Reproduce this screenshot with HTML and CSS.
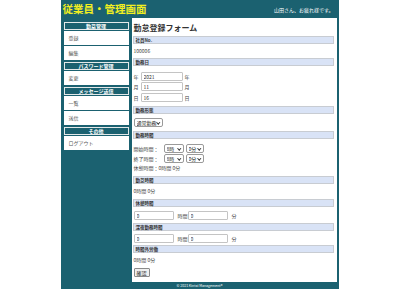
FILE: index.html
```html
<!DOCTYPE html>
<html lang="ja">
<head>
<meta charset="utf-8">
<title>従業員・管理画面</title>
<link rel="stylesheet" href="styles.css">
</head>
<body>
<div class="page">
  <header class="top">
    <h1 class="logo">従業員・管理画面</h1>
    <p class="greet">山田さん、お疲れ様です。</p>
  </header>
  <div class="body">
    <nav class="side">
      <div class="sec">
        <div class="sec-h">勤怠管理</div>
        <a class="item" href="#">登録</a>
        <a class="item" href="#">編集</a>
      </div>
      <div class="sec">
        <div class="sec-h">パスワード管理</div>
        <a class="item" href="#">変更</a>
      </div>
      <div class="sec">
        <div class="sec-h">メッセージ送信</div>
        <a class="item" href="#">一覧</a>
        <a class="item" href="#">送信</a>
      </div>
      <div class="sec">
        <div class="sec-h">その他</div>
        <a class="item" href="#">ログアウト</a>
      </div>
    </nav>
    <main class="panel">
      <h2 class="title">勤怠登録フォーム</h2>

      <div class="bar">社員No.</div>
      <div class="blk blk-text">100006</div>

      <div class="bar">勤務日</div>
      <div class="blk blk-date">
        <div class="row"><span>年</span><input class="inp inp-date" value="2021"><span>年</span></div>
        <div class="row"><span>月</span><input class="inp inp-date" value="11"><span>月</span></div>
        <div class="row"><span>日</span><input class="inp inp-date" value="16"><span>日</span></div>
      </div>

      <div class="bar">勤務形態</div>
      <div class="blk blk-sel">
        <span class="sel sel-type"><select><option>通常勤務</option></select></span>
      </div>

      <div class="bar">勤務時間</div>
      <div class="blk blk-time">
        <div class="row"><span class="lbl">開始時間：</span><span class="sel sel-h"><select><option>8時</option></select></span><span class="sel sel-m"><select><option>0分</option></select></span></div>
        <div class="row"><span class="lbl">終了時間：</span><span class="sel sel-h"><select><option>8時</option></select></span><span class="sel sel-m"><select><option>0分</option></select></span></div>
        <div class="row row-text">休憩時間：0時間 0分</div>
      </div>

      <div class="bar">勤怠時間</div>
      <div class="blk blk-text2">0時間 0分</div>

      <div class="bar">休憩時間</div>
      <div class="blk blk-inp">
        <div class="row"><input class="inp inp-wide" value="0"><span class="unit">時間</span><input class="inp inp-wide" value="0"><span class="unit">分</span></div>
      </div>

      <div class="bar">深夜勤務時間</div>
      <div class="blk blk-inp2">
        <div class="row"><input class="inp inp-wide" value="0"><span class="unit">時間</span><input class="inp inp-wide" value="0"><span class="unit">分</span></div>
      </div>

      <div class="bar">時間外労働</div>
      <div class="blk blk-last">
        <div class="line">0時間 0分</div>
        <button class="btn" type="button">確認</button>
      </div>
    </main>
  </div>
  <footer class="foot">© 2021 Kintai Management®</footer>
</div>
</body>
</html>
```

FILE: styles.css
```css
html, body {
  margin: 0;
  padding: 0;
  background: #ffffff;
  font-family: "Noto Sans CJK JP", "Noto Sans", sans-serif;
}

.page {
  width: 278px;
  height: 289px;
  margin: 0 auto;
  background: #1b6170;
  display: flex;
  flex-direction: column;
}

.top {
  height: 18px;
  flex: none;
  display: flex;
  align-items: center;
  justify-content: space-between;
  padding: 0 5px 0 2px;
}

.logo {
  margin: 0;
  font-size: 10.5px;
  line-height: 1;
  font-weight: 700;
  color: #f2ef1f;
}

.greet {
  margin: 0;
  font-size: 5px;
  line-height: 1;
  color: #ffffff;
}

.body {
  display: flex;
  align-items: flex-start;
  gap: 3px;
  padding: 0 2px 0 3px;
}

.side {
  width: 65px;
  flex: none;
  padding-top: 4px;
}

.sec {
  display: flex;
  flex-direction: column;
  gap: 1px;
  margin-bottom: 2px;
}

.sec-h {
  height: 8px;
  box-sizing: border-box;
  border: 1px solid #e4e9ea;
  color: #ffffff;
  font-size: 5px;
  font-weight: 700;
  line-height: 6px;
  text-align: center;
}

.item {
  display: block;
  height: 14px;
  background: #ffffff;
  color: #555555;
  font-size: 5px;
  line-height: 14px;
  padding-left: 5px;
  text-decoration: none;
}

.panel {
  width: 205px;
  height: 264px;
  flex: none;
  box-sizing: border-box;
  background: #ffffff;
  padding: 2px 3px 0 1px;
  color: #444444;
  font-size: 5px;
}

.title {
  margin: 0;
  padding-left: 1px;
  font-size: 8px;
  line-height: 16px;
  font-weight: 700;
  color: #333333;
}

.bar {
  height: 8px;
  box-sizing: border-box;
  background: #d9e3f6;
  border: 1px solid #c8ccd2;
  padding-left: 2px;
  font-size: 4.5px;
  font-weight: 700;
  line-height: 6px;
  color: #333333;
}

.blk {
  padding-left: 1px;
  font-size: 5px;
  color: #444444;
}

.blk-text { padding-top: 3px; padding-bottom: 3px; line-height: 8px; }
.blk-text2 { padding-top: 3px; padding-bottom: 4px; line-height: 8px; }

.row {
  display: flex;
  align-items: center;
  height: 10px;
}

.blk-date {
  padding-top: 5px;
  padding-bottom: 4px;
  display: flex;
  flex-direction: column;
  gap: 0.5px;
}

.blk-date .row { gap: 2px; }

.blk-sel { padding-top: 4px; padding-bottom: 4px; height: 9px; display: flex; }

.blk-time { padding-top: 4px; padding-bottom: 4px; }
.blk-time .row-text { height: 9px; }
.lbl { width: 30px; }

.blk-inp { padding-top: 3px; padding-bottom: 2px; }
.blk-inp2 { padding-top: 2px; padding-bottom: 1px; }
.blk-inp .row, .blk-inp2 .row { height: 11px; }
.unit { width: 14px; padding-left: 4px; box-sizing: border-box; }

.blk-last {
  padding-top: 3px;
  padding-bottom: 4px;
  display: flex;
  flex-direction: column;
  align-items: flex-start;
  gap: 4px;
}
.blk-last .line { line-height: 8px; }

.inp {
  height: 9px;
  box-sizing: border-box;
  border: 1px solid #c4c4c4;
  border-radius: 1px;
  padding: 0 2px;
  margin: 0;
  font-family: inherit;
  font-size: 5px;
  color: #333333;
  background: #ffffff;
  outline: none;
}

.inp-date { width: 42px; }
.inp-wide { width: 40px; }

.sel {
  position: relative;
  display: inline-block;
  height: 9px;
  margin-right: 2px;
}

.sel select {
  appearance: none;
  -webkit-appearance: none;
  height: 9px;
  width: 100%;
  box-sizing: border-box;
  border: 1px solid #9a9a9a;
  border-radius: 2px;
  padding: 0 0 0 2px;
  margin: 0;
  font-family: inherit;
  font-size: 5px;
  line-height: 7px;
  color: #222222;
  background: #ffffff;
}

.sel::after {
  content: "";
  position: absolute;
  right: 3px;
  top: 3px;
  width: 1.5px;
  height: 1.5px;
  border-right: 0.8px solid #333;
  border-bottom: 0.8px solid #333;
  transform: rotate(45deg);
  pointer-events: none;
}

.sel-type { width: 29px; }
.sel-h { width: 20px; }
.sel-m { width: 18px; }

.btn {
  height: 9px;
  padding: 0 2px;
  margin: 0;
  box-sizing: border-box;
  border: 1px solid #8a8a8a;
  border-radius: 1px;
  background: #efefef;
  font-family: inherit;
  font-size: 5px;
  line-height: 7px;
  color: #222222;
}

.foot {
  height: 7px;
  flex: none;
  color: #ffffff;
  font-size: 3.5px;
  line-height: 7px;
  text-align: center;
}
```
